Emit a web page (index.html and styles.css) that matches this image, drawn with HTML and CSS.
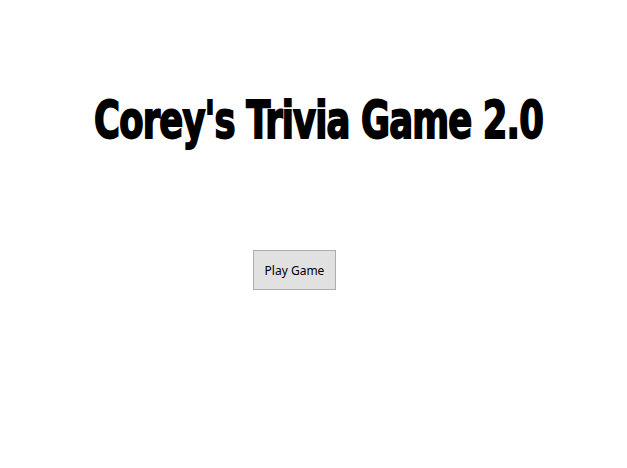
FILE: index.html
```html
<!DOCTYPE html>
<html>
<head>
<meta charset="utf-8">
<link rel="stylesheet" href="styles.css">
</head>
<body>
<main class="screen">
  <h1 class="title"><span class="title-text">Corey's Trivia Game 2.0</span></h1>
  <div class="actions">
    <button class="play-btn" type="button">Play Game</button>
  </div>
</main>
</body>
</html>
```

FILE: styles.css
```css
html, body {
  margin: 0;
  padding: 0;
  background: #ffffff;
}
.screen {
  width: 627px;
  height: 468px;
  display: flex;
  flex-direction: column;
}
.title {
  margin: 0;
  padding-top: 88px;
  padding-left: 10px;
  text-align: center;
  font-family: "DejaVu Sans Condensed", "DejaVu Sans", sans-serif;
  font-weight: bold;
  font-size: 46px;
  line-height: 64px;
  color: #000000;
  letter-spacing: -1px;
  white-space: nowrap;
}
.title-text {
  display: inline-block;
  transform: scale(0.855, 1.12);
  -webkit-text-stroke: 1.6px #000000;
}
.actions {
  padding-top: 98px;
  padding-left: 253px;
}
.play-btn {
  width: 83px;
  height: 40px;
  background: #e1e1e1;
  border: 1px solid #adadad;
  border-radius: 0;
  font-family: "Noto Sans", "Open Sans", sans-serif;
  font-size: 12px;
  color: #000000;
  padding: 0;
}
```
